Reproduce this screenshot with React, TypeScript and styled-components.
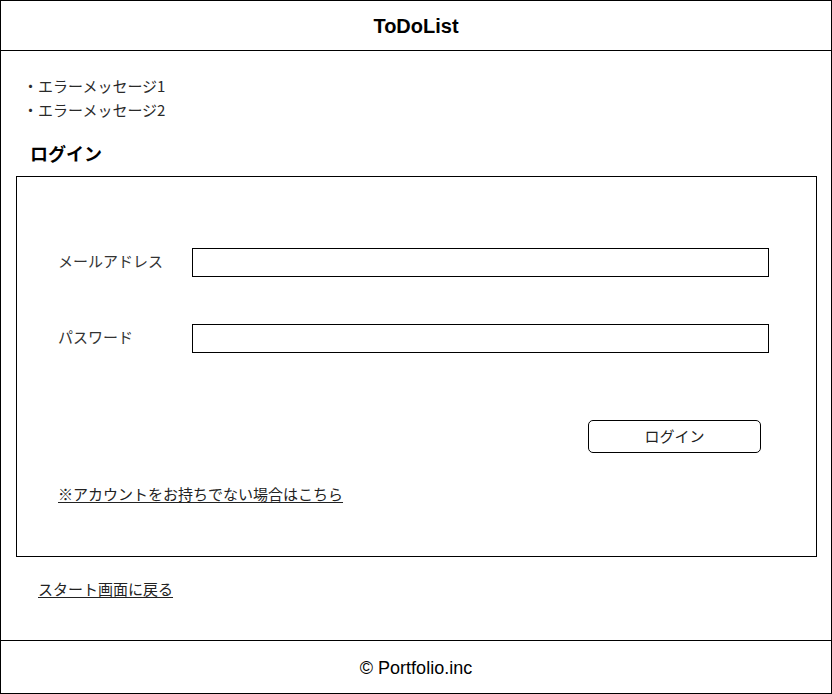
import React from "react";
import styled, { createGlobalStyle } from "styled-components";

const GlobalStyle = createGlobalStyle`
  html, body { margin: 0; padding: 0; background: #fff; }
  * { box-sizing: border-box; }
`;

const Frame = styled.div`
  width: 832px;
  height: 694px;
  border: 1px solid #000;
  display: flex;
  flex-direction: column;
  font-family: "Noto Sans CJK JP", "Liberation Sans", sans-serif;
  color: #222;
`;

const Header = styled.header`
  height: 50px;
  flex: none;
  border-bottom: 1px solid #000;
  display: flex;
  align-items: center;
  justify-content: center;
`;

const Title = styled.h1`
  margin: 0;
  font-family: "Liberation Sans", Arial, sans-serif;
  font-weight: bold;
  font-size: 20px;
  color: #000;
  padding-top: 2px;
`;

const Main = styled.main`
  flex: 1;
  display: flex;
  flex-direction: column;
  padding: 23px 0 0 15px;
`;

const ErrorList = styled.ul`
  margin: 0;
  padding: 0 0 0 7px;
  list-style: none;
`;

const ErrorItem = styled.li`
  font-size: 15px;
  line-height: 24px;
  color: #2a2a2a;
`;

const Heading = styled.h2`
  margin: 19px 0 0 14px;
  font-size: 18px;
  line-height: 24px;
  font-weight: bold;
  color: #000;
`;

const LoginBox = styled.section`
  margin-top: 11px;
  width: 801px;
  height: 381px;
  border: 1px solid #000;
  padding: 71px 47px 0 41px;
  display: flex;
  flex-direction: column;
`;

const FieldRow = styled.div<{ $gap: number }>`
  display: grid;
  grid-template-columns: 134px 1fr;
  align-items: center;
  margin-top: ${(p) => p.$gap}px;
`;

const Label = styled.label`
  font-size: 15px;
  line-height: 20px;
  color: #333;
  margin-top: -3px;
`;

const Input = styled.input`
  height: 29px;
  width: 100%;
  border: 1px solid #000;
  border-radius: 0;
  outline: none;
  padding: 0 6px;
  font-size: 15px;
  background: #fff;
`;

const ButtonRow = styled.div`
  display: flex;
  justify-content: flex-end;
  padding-right: 8px;
  margin-top: 67px;
`;

const Button = styled.button`
  width: 173px;
  height: 33px;
  border: 1px solid #000;
  border-radius: 5px;
  background: #fff;
  font-family: "Noto Sans CJK JP", sans-serif;
  font-size: 15px;
  color: #222;
  cursor: pointer;
  padding: 0 0 2px;
`;

const TextLink = styled.a<{ $top: number; $left: number }>`
  align-self: flex-start;
  margin-top: ${(p) => p.$top}px;
  margin-left: ${(p) => p.$left}px;
  font-size: 15px;
  line-height: 20px;
  color: #222;
  text-decoration: underline;
  text-underline-offset: 2px;
  cursor: pointer;
`;

const Footer = styled.footer`
  height: 53px;
  flex: none;
  border-top: 1px solid #000;
  display: flex;
  align-items: center;
  justify-content: center;
  padding-top: 2px;
  font-family: "Liberation Sans", Arial, sans-serif;
  font-size: 18px;
  color: #000;
`;

export default function App() {
  return (
    <>
      <GlobalStyle />
      <Frame>
        <Header>
          <Title>ToDoList</Title>
        </Header>
        <Main>
          <ErrorList>
            <ErrorItem>・エラーメッセージ1</ErrorItem>
            <ErrorItem>・エラーメッセージ2</ErrorItem>
          </ErrorList>
          <Heading>ログイン</Heading>
          <LoginBox>
            <FieldRow $gap={0}>
              <Label htmlFor="email">メールアドレス</Label>
              <Input id="email" type="email" />
            </FieldRow>
            <FieldRow $gap={47}>
              <Label htmlFor="password">パスワード</Label>
              <Input id="password" type="password" />
            </FieldRow>
            <ButtonRow>
              <Button type="button">ログイン</Button>
            </ButtonRow>
            <TextLink $top={31} $left={0}>※アカウントをお持ちでない場合はこちら</TextLink>
          </LoginBox>
          <TextLink $top={22} $left={22}>スタート画面に戻る</TextLink>
        </Main>
        <Footer>© Portfolio.inc</Footer>
      </Frame>
    </>
  );
}
